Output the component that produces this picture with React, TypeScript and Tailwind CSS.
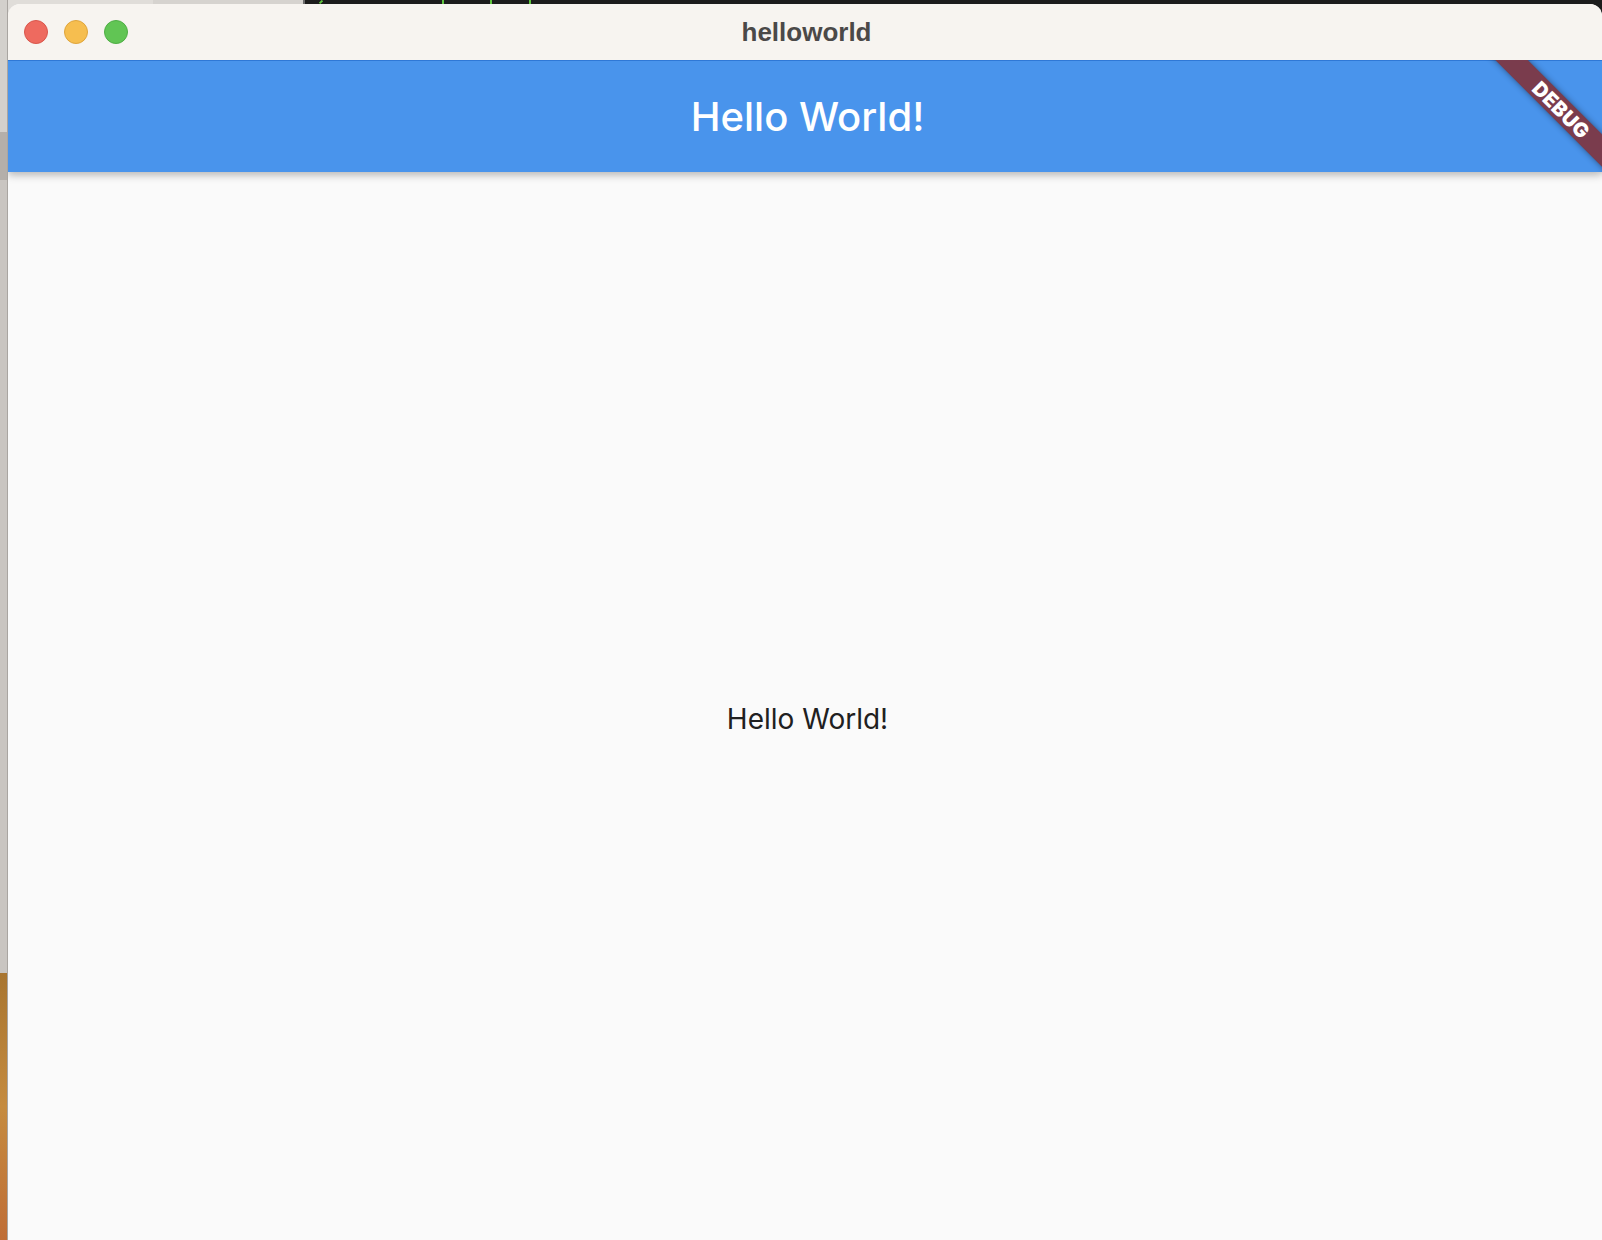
import React from "react";

function TrafficLights() {
  return (
    <div className="flex items-center gap-[16px] pl-[16px]">
      <span className="h-[24px] w-[24px] rounded-full border border-[#d9564c] bg-[#ee6a5f]" />
      <span className="h-[24px] w-[24px] rounded-full border border-[#dfa53c] bg-[#f6be4f]" />
      <span className="h-[24px] w-[24px] rounded-full border border-[#4fae45] bg-[#61c554]" />
    </div>
  );
}

export default function App() {
  return (
    <div className="flex h-[1240px] w-[1602px] overflow-hidden bg-[#1c1c1c]">
      {/* desktop strip on the left */}
      <div className="flex w-[8px] shrink-0 flex-col border-r border-[#a9a5a1]">
        <div className="h-[132px] bg-[#d3d0cc]" />
        <div className="h-[48px] bg-[#b4afaa]" />
        <div className="flex-1 bg-[#c9c5c1]" />
        <div className="h-[267px] bg-gradient-to-b from-[#a87530] via-[#c58b3f] to-[#bf6d36]" />
      </div>

      <div className="flex flex-1 flex-col">
        {/* desktop strip above the window */}
        <div className="relative flex h-[16px] shrink-0">
          <div className="w-[145px] bg-[#e0ddd9]" />
          <div className="w-[150px] bg-[#d6d3cf]" />
          <div className="w-[2px] bg-[#6b6b6b]" />
          <div className="flex-1 bg-[#1c1c1c]" />
          <span className="absolute left-[312px] top-0 h-[4px] w-[2px] rotate-45 bg-[#5fc43e]" />
          <span className="absolute left-[434px] top-0 h-[4px] w-[2px] bg-[#5fc43e]" />
          <span className="absolute left-[482px] top-0 h-[4px] w-[2px] bg-[#5fc43e]" />
          <span className="absolute left-[521px] top-0 h-[4px] w-[2px] bg-[#5fc43e]" />
        </div>

        {/* window */}
        <div className="relative -mt-[12px] flex flex-1 flex-col overflow-hidden rounded-t-[12px] bg-[#fafafa]">
          <div className="relative flex h-[56px] shrink-0 items-center bg-[#f7f4f0]">
            <TrafficLights />
            <div className="absolute inset-0 flex items-center justify-center pl-[3px] pt-[1px] font-['Liberation_Sans',Arial,sans-serif] text-[26px] font-bold text-[#4b4948]">
              helloworld
            </div>
          </div>

          <div className="relative flex flex-1 flex-col overflow-hidden">
            <header className="relative z-10 flex h-[112px] shrink-0 items-center justify-center border-t border-[#2f78d6] bg-[#4994ec] pl-[5px] shadow-[0_3px_8px_rgba(0,0,0,0.28)]">
              <h1 className="font-['Inter',sans-serif] text-[40px] font-medium leading-none text-white">
                Hello World!
              </h1>
            </header>

            <main className="flex flex-1 items-center justify-center pl-[5px] pt-[26px]">
              <p className="font-['Inter',sans-serif] text-[28px] leading-[34px] text-[#202020]">
                Hello World!
              </p>
            </main>

            {/* debug banner */}
            <div className="absolute right-[-45px] top-[34px] z-20 flex h-[23px] w-[180px] rotate-45 items-center justify-center bg-[#7a3c4d] pl-[12px] shadow-[0_0_6px_rgba(0,0,0,0.45)]">
              <span className="font-['Inter',sans-serif] text-[20px] font-black leading-none tracking-[0.3px] text-white">
                DEBUG
              </span>
            </div>
          </div>
        </div>
      </div>
    </div>
  );
}
